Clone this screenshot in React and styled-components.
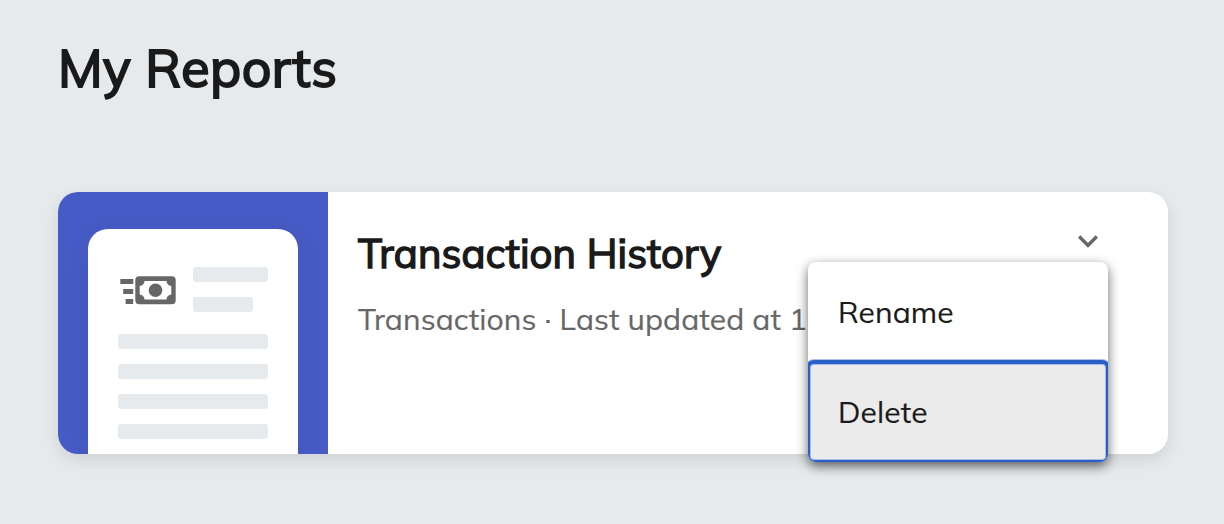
import React from "react";
import styled, { createGlobalStyle } from "styled-components";

const colors = {
  page: "#e6eaed",
  ink: "#1a1a1a",
  muted: "#666666",
  indigo: "#475bc6",
  focus: "#2860c8",
  hover: "#ebebeb",
};

const GlobalStyle = createGlobalStyle`
  body {
    margin: 0;
    background: ${colors.page};
    font-family: Mulish, Lato, sans-serif;
    color: ${colors.ink};
  }

  * {
    box-sizing: border-box;
  }
`;

const Page = styled.main`
  height: 524px;
  padding: 34px 56px 0 58px;
  overflow: hidden;
`;

const PageTitle = styled.h1`
  margin: 0 0 90px;
  font-size: 52px;
  line-height: 68px;
  font-weight: 400;
  letter-spacing: 0.5px;
  -webkit-text-stroke: 2px;
`;

const Card = styled.article`
  display: flex;
  width: 1110px;
  height: 262px;
  background: #fff;
  border-radius: 20px;
  box-shadow: 0 6px 16px rgba(0, 0, 0, 0.1);
`;

const Thumbnail = styled.div`
  width: 270px;
  padding: 37px 30px 0;
  background: ${colors.indigo};
  border-radius: 20px 0 0 20px;
  overflow: hidden;
`;

const Paper = styled.div`
  height: 225px;
  padding: 38px 30px 0;
  background: #fff;
  border-radius: 20px 20px 0 0;
  box-shadow: 0 6px 30px rgba(0, 0, 0, 0.06);
`;

const PaperHeader = styled.div`
  display: flex;
  gap: 15px;
  margin-bottom: 22px;
`;

const Lines = styled.div`
  display: flex;
  flex-direction: column;
  gap: 15px;
`;

const Line = styled.div`
  width: ${({ $width }) => $width};
  height: 15px;
  background: ${colors.page};
  border-radius: 3px;
`;

const Details = styled.div`
  display: flex;
  flex: 1;
  justify-content: space-between;
  min-width: 0;
  padding: 29px 60px 0 30px;
`;

const Summary = styled.div`
  width: 460px;
  white-space: nowrap;
`;

const ReportName = styled.h2`
  margin: 6px 0 21px;
  font-size: 40px;
  line-height: 52px;
  font-weight: 400;
  letter-spacing: 0.17px;
  -webkit-text-stroke: 1.5px;
`;

const Meta = styled.p`
  margin: 0;
  font-size: 30px;
  line-height: 38px;
  color: ${colors.muted};
  letter-spacing: 0.12px;
  -webkit-text-stroke: 0.2px;
`;

const Actions = styled.div`
  position: relative;
  flex: none;
`;

const ToggleButton = styled.button`
  display: block;
  padding: 0;
  border: 0;
  background: none;
  color: ${colors.muted};
`;

const Menu = styled.ul`
  position: absolute;
  top: 41px;
  right: 0;
  width: 300px;
  margin: 0;
  padding: 0;
  list-style: none;
  background: #fff;
  border-radius: 8px;
  box-shadow: 0 4px 12px rgba(0, 0, 0, 0.6);
  overflow: hidden;
`;

const MenuItem = styled.li`
  position: relative;
  height: 100px;
  padding: 0 30px;
  font-size: 30px;
  line-height: 100px;
  letter-spacing: 0.12px;
  -webkit-text-stroke: 0.15px;

  ${({ $focused }) =>
    $focused &&
    `
    background: ${colors.hover};
    border-radius: 6px;
    outline: 4px solid ${colors.focus};
    outline-offset: -2px;
    box-shadow: 0 0 0 3px #a9bfe9, inset 0 0 0 3px #a9bfe9;
  `}
`;

const CashIcon = () => (
  <svg width="60" height="45" viewBox="0 0 60 45" fill={colors.muted}>
    <path d="M2.3 12h13v5h-13zM5.2 22h10v5h-10zM7.6 32h7.6v5H7.6z" />
    <path
      fillRule="evenodd"
      d="M21.3 9.3h32.4a4 4 0 0 1 4 4v19.9a4 4 0 0 1-4 4H21.3a4 4 0 0 1-4-4V13.3a4 4 0 0 1 4-4zM26.5 14a5 5 0 0 1-4.8 5v8.6a5 5 0 0 1 4.8 4.9h22a5 5 0 0 1 4.8-4.9V19a5 5 0 0 1-4.8-5z"
    />
    <circle cx="37.5" cy="23.3" r="6.8" />
  </svg>
);

const ChevronIcon = () => (
  <svg width="40" height="40" viewBox="0 0 24 24" fill="currentColor" display="block">
    <path d="M16.59 8.59 12 13.17 7.41 8.59 6 10l6 6 6-6z" />
  </svg>
);

const ReportThumbnail = () => (
  <Thumbnail>
    <Paper>
      <PaperHeader>
        <CashIcon />
        <Lines>
          <Line $width="75px" />
          <Line $width="60px" />
        </Lines>
      </PaperHeader>
      <Lines>
        <Line $width="150px" />
        <Line $width="150px" />
        <Line $width="150px" />
        <Line $width="150px" />
      </Lines>
    </Paper>
  </Thumbnail>
);

const ReportCard = ({ name, meta }) => (
  <Card>
    <ReportThumbnail />
    <Details>
      <Summary>
        <ReportName>{name}</ReportName>
        <Meta>{meta}</Meta>
      </Summary>
      <Actions>
        <ToggleButton aria-label="Report options">
          <ChevronIcon />
        </ToggleButton>
        <Menu>
          <MenuItem>Rename</MenuItem>
          <MenuItem $focused>Delete</MenuItem>
        </Menu>
      </Actions>
    </Details>
  </Card>
);

const App = () => (
  <>
    <GlobalStyle />
    <Page>
      <PageTitle>My Reports</PageTitle>
      <ReportCard name="Transaction History" meta="Transactions · Last updated at 1" />
    </Page>
  </>
);

export default App;
